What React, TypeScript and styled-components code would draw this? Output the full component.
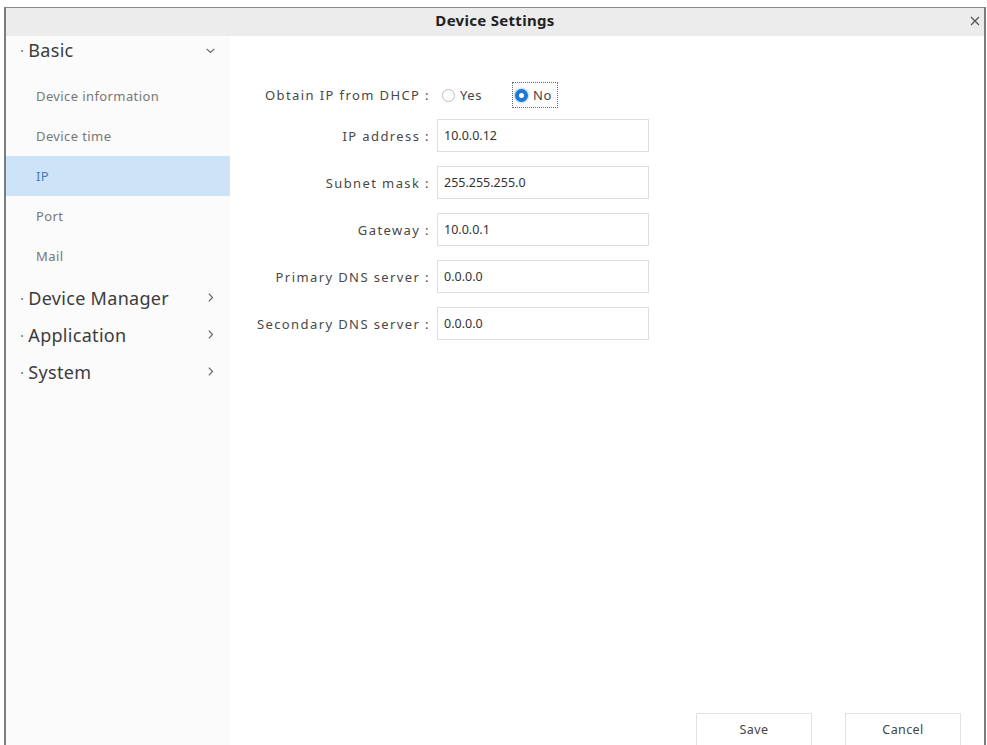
import React, { useState } from "react";
import styled, { createGlobalStyle } from "styled-components";

const Global = createGlobalStyle`
  html, body { margin: 0; padding: 0; background: #ffffff; }
  body { font-family: "Noto Sans", "Open Sans", sans-serif; color: #333; overflow: hidden; }
  * { box-sizing: border-box; }
`;

const Window = styled.div`
  margin: 7px 0 0 4px;
  width: 982px;
  height: 738px;
  border-top: 1px solid #8a8a8a;
  border-left: 2px solid #7c7c7c;
  border-right: 2px solid #7c7c7c;
  display: flex;
  flex-direction: column;
  background: #fff;
`;

const TitleBar = styled.div`
  height: 28px;
  background: #ececec;
  display: flex;
  align-items: center;
  justify-content: center;
  padding-bottom: 4px;
  position: relative;
  flex-shrink: 0;
`;

const Title = styled.div`
  font-size: 15px;
  font-weight: 700;
  color: #222;
  letter-spacing: 0.3px;
`;

const Close = styled.button`
  position: absolute;
  right: 1px;
  top: 5px;
  width: 16px;
  height: 16px;
  border: none;
  background: transparent;
  padding: 0;
  display: flex;
  align-items: center;
  justify-content: center;
  cursor: pointer;
`;

const Body = styled.div`
  flex: 1;
  display: flex;
  min-height: 0;
`;

const Sidebar = styled.nav`
  width: 224px;
  background: #fbfbfb;
  display: flex;
  flex-direction: column;
  flex-shrink: 0;
`;

const Group = styled.div<{ $h: number }>`
  height: ${(p) => p.$h}px;
  display: flex;
  align-items: center;
  justify-content: space-between;
  padding: 0 14px 0 14px;
  font-size: 18px;
  letter-spacing: 0.3px;
  color: #3c3c3c;
  cursor: pointer;
`;

const GroupLabel = styled.span`
  display: flex;
  align-items: center;
  &::before {
    content: "·";
    color: #777;
    font-size: 15px;
    margin-right: 4px;
  }
`;

const SubList = styled.div`
  display: flex;
  flex-direction: column;
  padding: 12px 0 3px;
`;

const Item = styled.div<{ $active?: boolean }>`
  height: 40px;
  display: flex;
  align-items: center;
  padding-left: 30px;
  font-size: 13px;
  letter-spacing: 0.4px;
  color: ${(p) => (p.$active ? "#4a7bb7" : "#777777")};
  background: ${(p) => (p.$active ? "#cde3f8" : "transparent")};
  cursor: pointer;
`;

const Main = styled.div`
  flex: 1;
  display: flex;
  flex-direction: column;
`;

const Form = styled.div`
  padding: 42px 0 0 0;
  display: flex;
  flex-direction: column;
`;

const Row = styled.div<{ $h: number }>`
  display: grid;
  grid-template-columns: 200px 212px;
  column-gap: 7px;
  align-items: center;
  height: ${(p) => p.$h}px;
`;

const Label = styled.label`
  text-align: right;
  font-size: 13px;
  color: #484848;
  letter-spacing: 1.4px;
  white-space: nowrap;
`;

const Field = styled.input`
  height: 33px;
  width: 212px;
  border: 1px solid #dedede;
  padding: 0 6px;
  font-family: inherit;
  font-size: 12.5px;
  color: #333;
  outline: none;
  background: #fff;
`;

const Radios = styled.div`
  display: flex;
  align-items: center;
  gap: 24px;
  padding-left: 2px;
`;

const RadioOption = styled.label<{ $focus?: boolean }>`
  display: flex;
  align-items: center;
  gap: 5px;
  font-size: 13px;
  letter-spacing: 0.6px;
  color: #444;
  padding: 3px 5px 3px 2px;
  border: 1px dotted ${(p) => (p.$focus ? "#6a6a6a" : "transparent")};
  cursor: pointer;
`;

const RadioDot = styled.span<{ $on?: boolean }>`
  width: 13px;
  height: 13px;
  border-radius: 50%;
  border: ${(p) => (p.$on ? "4px solid #1f78d1" : "1px solid #bdbdbd")};
  background: #fff;
  box-shadow: ${(p) => (p.$on ? "0 0 2px 1px rgba(31,120,209,0.35)" : "none")};
  display: inline-block;
`;

const Footer = styled.div`
  margin-top: auto;
  display: flex;
  justify-content: flex-end;
  gap: 33px;
  padding-right: 23px;
`;

const Button = styled.button`
  width: 116px;
  height: 32px;
  border: 1px solid #e2e2e2;
  border-bottom: none;
  background: #fff;
  font-family: inherit;
  font-size: 12.5px;
  letter-spacing: 0.4px;
  color: #444;
  padding-top: 1px;
  cursor: pointer;
`;

const Chevron = ({ down }: { down?: boolean }) => (
  <svg width="11" height="11" viewBox="0 0 10 10" fill="none" stroke="#666" strokeWidth="1.1">
    {down ? <path d="M1.5 3.5 L5 6.8 L8.5 3.5" /> : <path d="M3.5 1.5 L6.8 5 L3.5 8.5" />}
  </svg>
);

const fields = [
  { label: "IP address :", value: "10.0.0.12" },
  { label: "Subnet mask :", value: "255.255.255.0" },
  { label: "Gateway :", value: "10.0.0.1" },
  { label: "Primary DNS server :", value: "0.0.0.0" },
  { label: "Secondary DNS server :", value: "0.0.0.0" },
];

export default function App() {
  const [dhcp, setDhcp] = useState(false);
  return (
    <>
      <Global />
      <Window>
        <TitleBar>
          <Title>Device Settings</Title>
          <Close aria-label="close">
            <svg width="10" height="10" viewBox="0 0 10 10" stroke="#555" strokeWidth="1.3">
              <path d="M1 1 L9 9 M9 1 L1 9" />
            </svg>
          </Close>
        </TitleBar>
        <Body>
          <Sidebar>
            <Group $h={28}>
              <GroupLabel>Basic</GroupLabel>
              <Chevron down />
            </Group>
            <SubList>
              <Item>Device information</Item>
              <Item>Device time</Item>
              <Item $active>IP</Item>
              <Item>Port</Item>
              <Item>Mail</Item>
            </SubList>
            <Group $h={37}>
              <GroupLabel>Device Manager</GroupLabel>
              <Chevron />
            </Group>
            <Group $h={37}>
              <GroupLabel>Application</GroupLabel>
              <Chevron />
            </Group>
            <Group $h={37}>
              <GroupLabel>System</GroupLabel>
              <Chevron />
            </Group>
          </Sidebar>
          <Main>
            <Form>
              <Row $h={34}>
                <Label>Obtain IP from DHCP :</Label>
                <Radios>
                  <RadioOption onClick={() => setDhcp(true)}>
                    <RadioDot $on={dhcp} />
                    Yes
                  </RadioOption>
                  <RadioOption $focus onClick={() => setDhcp(false)}>
                    <RadioDot $on={!dhcp} />
                    No
                  </RadioOption>
                </Radios>
              </Row>
              {fields.map((f) => (
                <Row $h={47} key={f.label}>
                  <Label>{f.label}</Label>
                  <Field defaultValue={f.value} />
                </Row>
              ))}
            </Form>
            <Footer>
              <Button>Save</Button>
              <Button>Cancel</Button>
            </Footer>
          </Main>
        </Body>
      </Window>
    </>
  );
}
